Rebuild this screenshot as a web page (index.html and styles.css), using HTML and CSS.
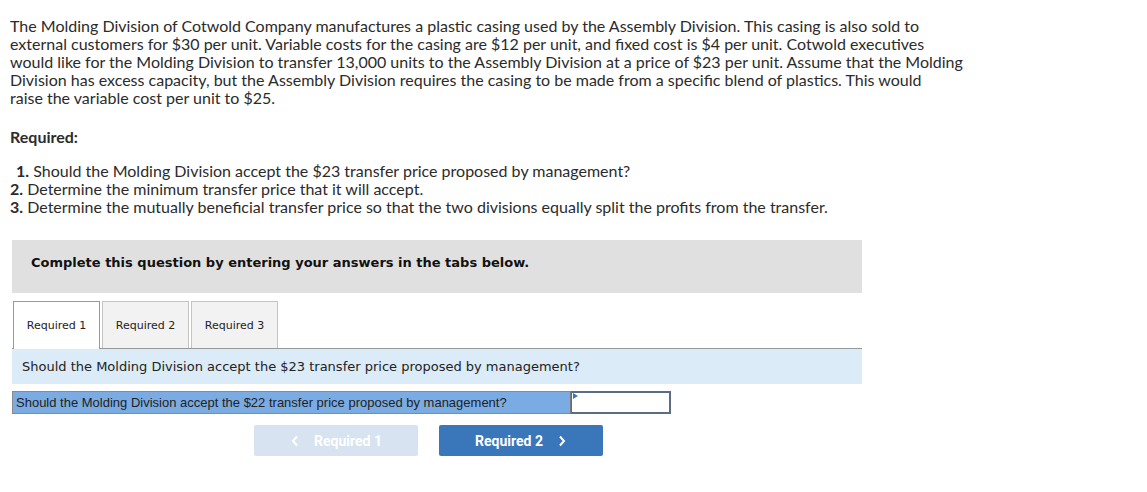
FILE: index.html
```html
<!DOCTYPE html>
<html>
<head>
<meta charset="utf-8">
<link rel="stylesheet" href="styles.css">
</head>
<body>
<div class="page">
  <p class="intro">The Molding Division of Cotwold Company manufactures a plastic casing used by the Assembly Division. This casing is also sold to<br>external customers for $30 per unit. Variable costs for the casing are $12 per unit, and fixed cost is $4 per unit. Cotwold executives<br>would like for the Molding Division to transfer 13,000 units to the Assembly Division at a price of $23 per unit. Assume that the Molding<br>Division has excess capacity, but the Assembly Division requires the casing to be made from a specific blend of plastics. This would<br>raise the variable cost per unit to $25.</p>
  <p class="req-title">Required:</p>
  <ol class="req-list">
    <li><b class="n1">1.</b> Should the Molding Division accept the $23 transfer price proposed by management?</li>
    <li><b>2.</b> Determine the minimum transfer price that it will accept.</li>
    <li><b>3.</b> Determine the mutually beneficial transfer price so that the two divisions equally split the profits from the transfer.</li>
  </ol>
  <div class="instructions">Complete this question by entering your answers in the tabs below.</div>
  <div class="tabs">
    <div class="tab active">Required 1</div>
    <div class="tab">Required 2</div>
    <div class="tab">Required 3</div>
  </div>
  <div class="panel-head">Should the Molding Division accept the $23 transfer price proposed by management?</div>
  <div class="answer-row">
    <div class="answer-label">Should the Molding Division accept the $22 transfer price proposed by management?</div>
    <div class="answer-input"><span class="marker"></span></div>
  </div>
  <div class="nav">
    <button class="btn prev"><svg width="10" height="12" viewBox="0 0 10 12"><path d="M7 1.5 L3 6 L7 10.5" fill="none" stroke="currentColor" stroke-width="2"/></svg><span>Required 1</span></button>
    <button class="btn next"><span>Required 2</span><svg width="10" height="12" viewBox="0 0 10 12"><path d="M3 1.5 L7 6 L3 10.5" fill="none" stroke="currentColor" stroke-width="2"/></svg></button>
  </div>
</div>
</body>
</html>
```
FILE: styles.css
```css
* { box-sizing: border-box; }
html, body { margin: 0; padding: 0; background: #fff; }
.page {
  padding: 17px 10px 0 10px;
  font-family: "Lato", "Open Sans", sans-serif;
  color: #2b2b2b;
}
.intro {
  margin: 0;
  width: 1000px;
  font-size: 16px;
  line-height: 18px;
}
.req-title {
  margin: 21px 0 0 0;
  font-size: 16px;
  line-height: 18px;
  font-weight: 700;
}
.req-list {
  list-style: none;
  margin: 16px 0 0 0;
  padding: 0;
  font-size: 16px;
  line-height: 18px;
}
.req-list b { font-weight: 700; }
.n1 { padding-left: 6px; }
.instructions {
  margin: 24px 0 0 2px;
  width: 850px;
  height: 53px;
  background: #e0e0e0;
  padding: 15px 0 0 19px;
  font-family: Verdana, "DejaVu Sans", sans-serif;
  font-size: 13px;
  font-weight: 700;
  line-height: 16px;
  color: #111;
}
.tabs {
  display: flex;
  gap: 2px;
  margin: 8px 0 0 3px;
  height: 47px;
  position: relative;
  z-index: 1;
}
.tab {
  width: 87px;
  height: 47px;
  border: 1px solid #c4c4c4;
  border-bottom: none;
  background: #f2f2f2;
  font-family: Tahoma, "DejaVu Sans", sans-serif;
  font-size: 11px;
  color: #222;
  display: flex;
  align-items: center;
  justify-content: center;
}
.tab.active {
  background: #fff;
  border-color: #999;
  height: 48px;
}
.panel-head {
  margin-left: 2px;
  width: 850px;
  height: 36px;
  border-top: 1px solid #999;
  background: #dbebf8;
  padding: 0 0 0 10px;
  display: flex;
  align-items: center;
  font-family: Verdana, "DejaVu Sans", sans-serif;
  font-size: 13px;
  color: #222;
}
.answer-row {
  display: flex;
  margin: 7px 0 0 2px;
  height: 23px;
}
.answer-label {
  width: 559px;
  height: 23px;
  background: #7aace3;
  border: 1px solid #8a8a8a;
  border-right: 1px solid #7a7a7a;
  padding: 0 0 0 3px;
  display: flex;
  align-items: center;
  font-family: "Liberation Sans", Arial, sans-serif;
  font-size: 13px;
  color: #222;
}
.answer-input {
  position: relative;
  width: 100px;
  height: 23px;
  background: #fff;
  border: 2px solid #5b6d86;
  border-left-width: 1px;
}
.marker {
  position: absolute;
  left: 1px;
  top: 0;
  width: 0;
  height: 0;
  border-top: 3px solid transparent;
  border-bottom: 3px solid transparent;
  border-left: 5px solid #3a78c0;
}
.nav {
  display: flex;
  gap: 21px;
  margin: 11px 0 0 244px;
}
.btn {
  width: 164px;
  height: 31px;
  border: none;
  border-radius: 2px;
  display: flex;
  align-items: center;
  justify-content: center;
  gap: 14px;
  font-family: Roboto, "Liberation Sans", sans-serif;
  font-size: 14px;
  font-weight: 700;
  color: #fff;
  padding: 0;
}
.btn.prev { background: #d7e3f1; }
.btn.next { background: #3a76ba; }
.btn svg { display: block; }
```
